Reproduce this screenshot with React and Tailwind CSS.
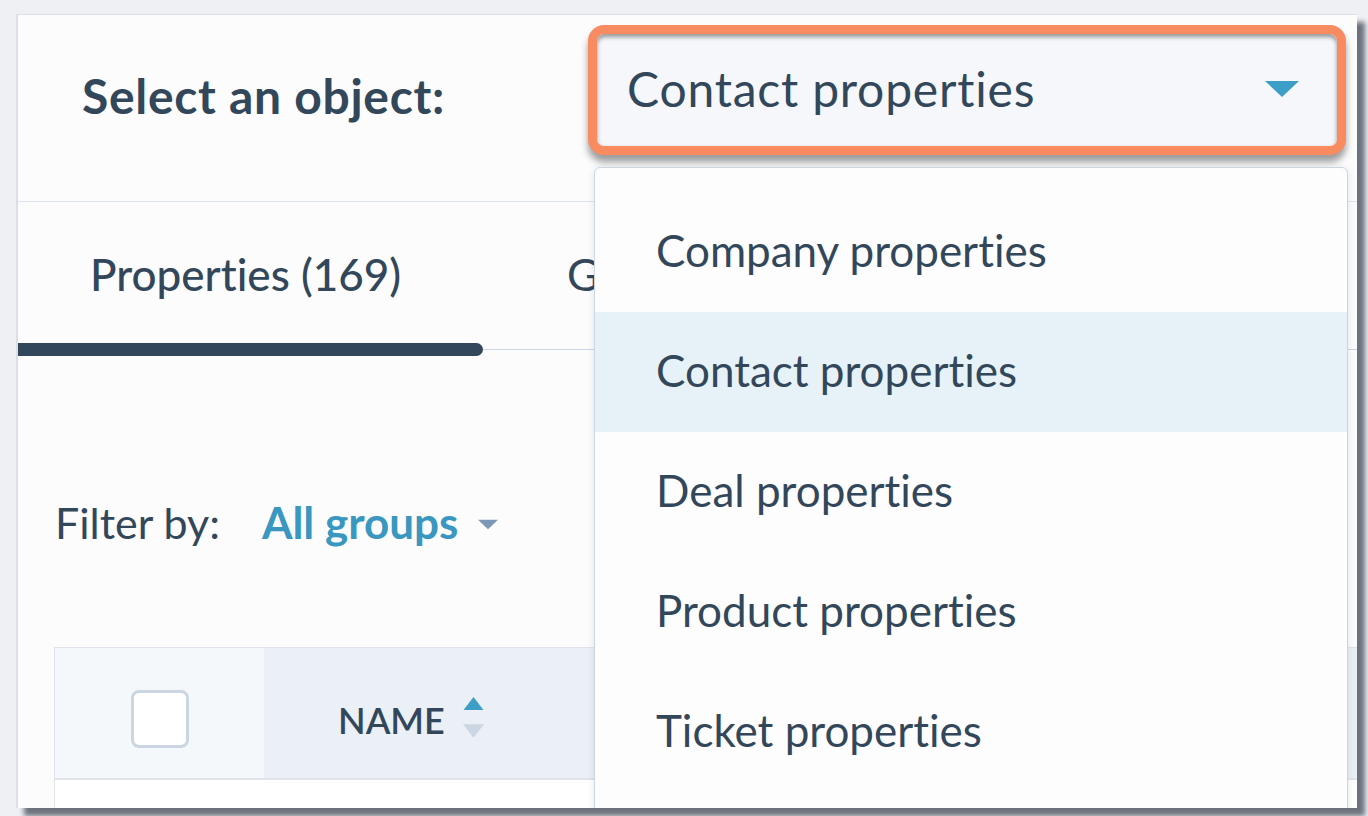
import React from "react";

const font = { fontFamily: "Lato, 'Open Sans', sans-serif" };

const options = [
  "Company properties",
  "Contact properties",
  "Deal properties",
  "Product properties",
  "Ticket properties",
];

const Caret = ({ className }) => (
  <svg viewBox="0 0 34 16" className={className}>
    <polygon points="0,0 34,0 17,16" fill="currentColor" />
  </svg>
);

const ObjectSelect = () => (
  <div className="mt-[10px] w-[758px] h-[130px] shrink-0 rounded-[16px] border-[9px] border-[#f98b60] bg-[#f5f7fa] shadow-[0_7px_7px_rgba(40,40,40,0.45)]">
    <div className="flex h-full items-center justify-between rounded-[8px] pl-[30px] pr-[38px] pb-[2px] shadow-[inset_0_3px_4px_rgba(30,30,30,0.45)]">
      <span className="text-[48px] leading-none tracking-[0.8px] text-[#33475b]">Contact properties</span>
      <Caret className="w-[34px] h-[16px] text-[#3d9fc8]" />
    </div>
  </div>
);

const Dropdown = () => (
  <div className="absolute left-[576px] top-[152px] w-[754px] h-[700px] rounded-t-[6px] border border-[#cbd6e2] bg-[#fdfdfe] pt-[24px] shadow-[0_2px_8px_rgba(45,62,80,0.12)]">
    {options.map((opt) => (
      <div
        key={opt}
        className={
          opt === "Contact properties"
            ? "flex h-[120px] items-center bg-[#e6f2f8] pl-[61px] pb-[4px]"
            : "flex h-[120px] items-center pl-[61px] pb-[4px]"
        }
      >
        <span className="text-[44px] leading-none text-[#33475b]">{opt}</span>
      </div>
    ))}
  </div>
);

export default function App() {
  return (
    <div
      className="w-[1368px] h-[816px] overflow-hidden bg-[#eef0f4] pl-[16px] pt-[14px] [font-variant-ligatures:none]"
      style={font}
    >
      <div className="relative w-[1341px] h-[794px] overflow-hidden border-l-2 border-t border-[#dcdfe6] bg-[#fcfcfd] shadow-[8px_8px_5px_rgba(75,82,95,0.8)]">
        {/* header */}
        <div className="flex h-[187px] border-b border-[#dfe3eb]">
          <div className="w-[570px] shrink-0 pl-[64px] pt-[57px]">
            <h1 className="text-[48px] font-bold leading-[48px] tracking-[0.7px] text-[#33475b]">Select an object:</h1>
          </div>
          <ObjectSelect />
        </div>

        {/* tabs */}
        <div className="flex h-[148px] items-end border-b border-[#cbd6e2]">
          <div className="-mb-[7px] flex w-[465px] flex-col">
            <div className="flex h-[141px] items-center pl-[72px] pt-[2px]">
              <span className="text-[44px] font-medium leading-none text-[#33475b]">Properties (169)</span>
            </div>
            <div className="h-[13px] rounded-r-full bg-[#33475b]" />
          </div>
          <div className="flex h-[141px] items-center pl-[84px] pt-[2px] self-start">
            <span className="text-[44px] leading-none text-[#33475b]">Groups</span>
          </div>
        </div>

        {/* filter */}
        <div className="mt-[148px] flex h-[48px] items-center pl-[37px]">
          <span className="text-[43px] leading-none text-[#33475b]">Filter by:</span>
          <span className="ml-[42px] text-[44px] font-bold leading-none text-[#3a97c0]">All groups</span>
          <Caret className="ml-[20px] mt-[4px] w-[20px] h-[11px] text-[#7c98b6]" />
        </div>

        {/* table */}
        <div className="ml-[36px] mt-[101px] border-l border-t border-[#dfe3eb]">
          <div className="flex h-[132px] border-b-2 border-[#dfe3eb]">
            <div className="flex w-[209px] items-center justify-center bg-[#f5f8fa] pt-[12px]">
              <div className="h-[58px] w-[58px] rounded-[8px] border-[3px] border-[#cbd6e2] bg-white" />
            </div>
            <div className="flex flex-1 items-center bg-[#eaf0f6] pl-[74px] pt-[14px]">
              <span className="text-[36px] font-semibold leading-none text-[#33475b]">NAME</span>
              <div className="ml-[18px] -mt-[6px] flex flex-col gap-[14px]">
                <svg viewBox="0 0 20 13" className="w-[21px] h-[13px]">
                  <polygon points="10,0 20,13 0,13" fill="#3d9fc8" />
                </svg>
                <svg viewBox="0 0 20 13" className="w-[21px] h-[14px]">
                  <polygon points="0,0 20,0 10,13" fill="#cbd6e2" />
                </svg>
              </div>
            </div>
          </div>
          <div className="h-[40px] bg-white" />
        </div>

        <Dropdown />
      </div>
    </div>
  );
}
